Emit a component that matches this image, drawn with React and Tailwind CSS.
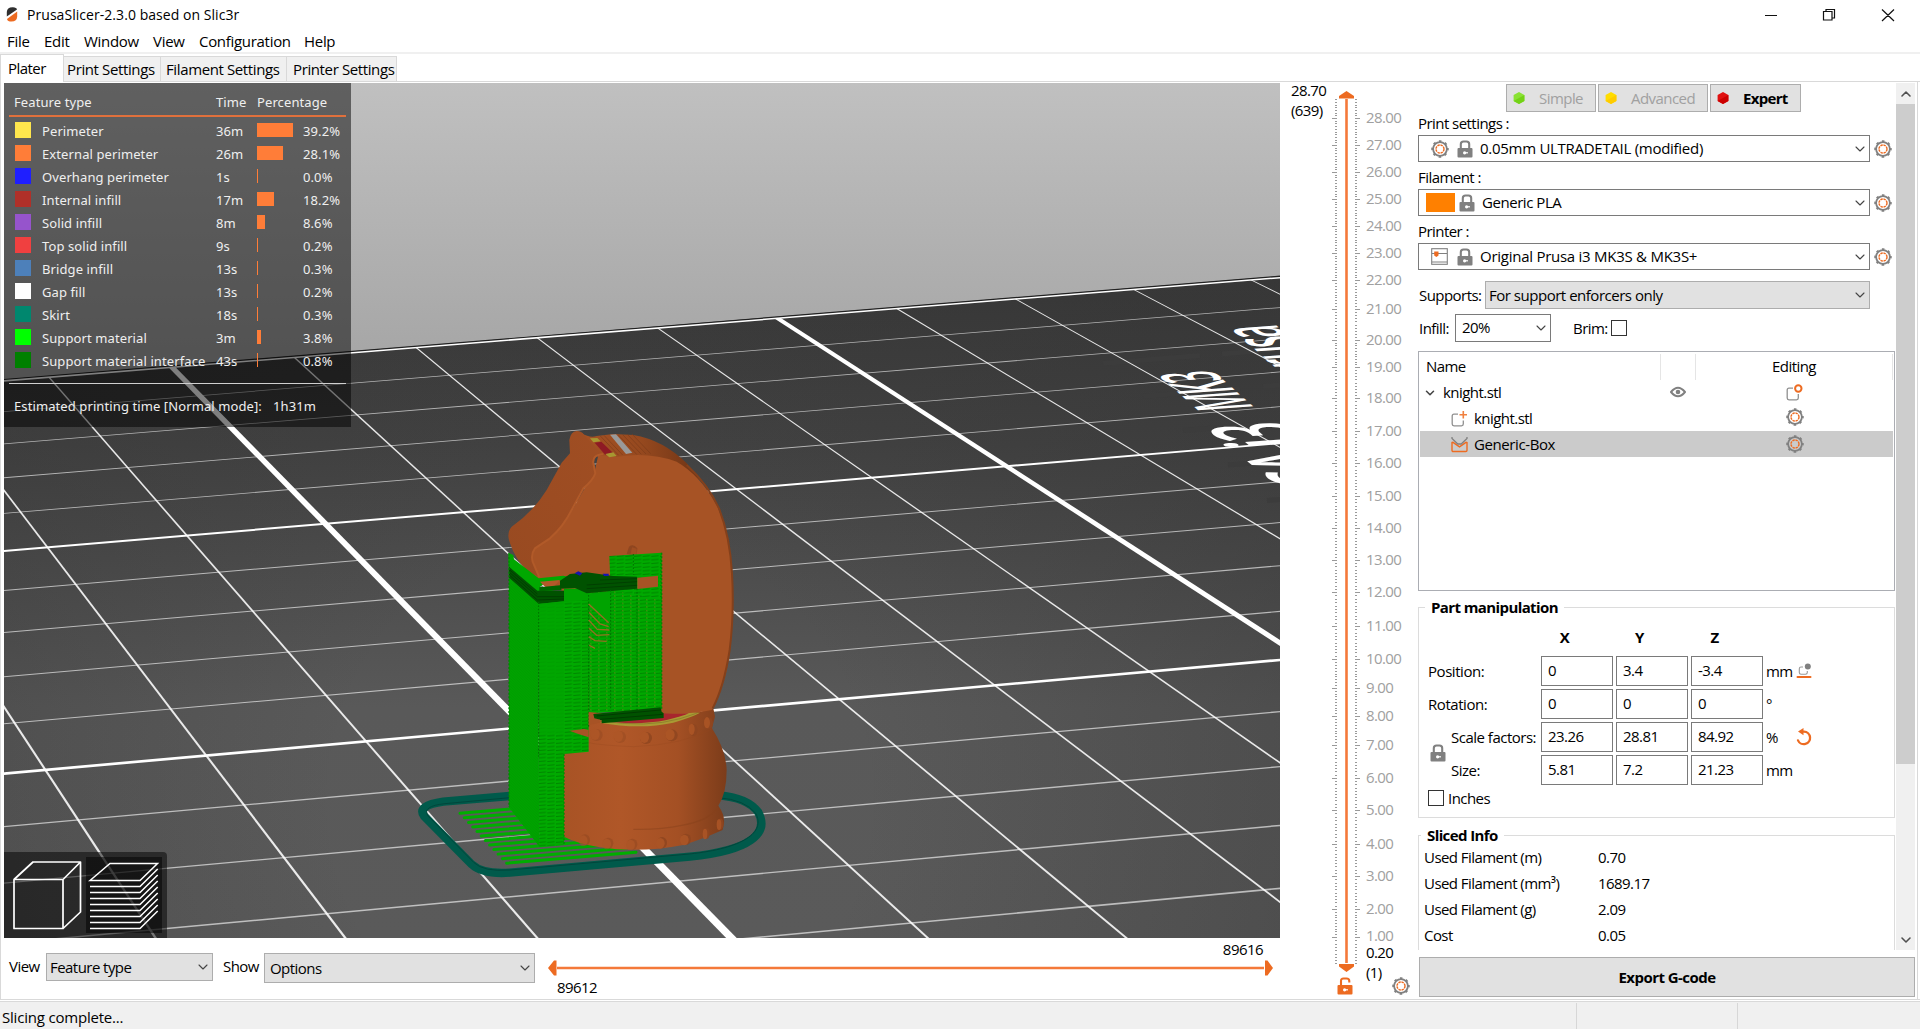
import React from "react";
import { ChevronDown, ChevronUp } from "lucide-react";

/* ---------- print bed projection ---------- */
const quad = [[172, 367.3], [777.6, 318.3], [1303, 657.9], [524.8, 727.2]];

function makeProjection([p0, p1, p2, p3]) {
  const sx = p0[0] - p1[0] + p2[0] - p3[0];
  const sy = p0[1] - p1[1] + p2[1] - p3[1];
  const dx1 = p1[0] - p2[0], dx2 = p3[0] - p2[0];
  const dy1 = p1[1] - p2[1], dy2 = p3[1] - p2[1];
  const det = dx1 * dy2 - dx2 * dy1;
  const g = (sx * dy2 - dx2 * sy) / det;
  const h = (dx1 * sy - sx * dy1) / det;
  const a = p1[0] - p0[0] + g * p1[0];
  const b = p3[0] - p0[0] + h * p3[0];
  const d = p1[1] - p0[1] + g * p1[1];
  const e = p3[1] - p0[1] + h * p3[1];
  return (i, j) => {
    const u = i / 5, v = j / 10;
    const w = g * u + h * v + 1;
    return `${((a * u + b * v + p0[0]) / w).toFixed(2)},${((d * u + e * v + p0[1]) / w).toFixed(2)}`;
  };
}
const project = makeProjection(quad);
const strip = (i0, j0, i1, j1, di, dj) =>
  [project(i0 - di, j0 - dj), project(i1 - di, j1 - dj), project(i1 + di, j1 + dj), project(i0 + di, j0 + dj)].join(" ");

const columns = [];
const rows = [];
for (let i = -8; i <= 12; i++) {
  const t = i % 5 === 0;
  columns.push({ key: i, points: strip(i, 0, i, 17, t ? 0.027 : 0.0075, 0), o: t ? 1 : 0.88 });
}
for (let j = 0; j <= 17; j++) {
  const t = j % 5 === 0;
  rows.push({ key: j, points: strip(-8, j, 13, j, 0, t ? 0.026 : 0.012), o: t ? 1 : 0.62 });
}

const bumps = [[590, 1005], [660, 1011], [738, 1014], [815, 1006], [880, 990], [926, 970]];
const lowBumps = [[555, 1320], [625, 1330], [697, 1333], [786, 1328], [858, 1318], [920, 1300], [962, 1272]];

function Knight() {
  return (
    <g transform="translate(400 400) scale(0.33333)">
      <path d="M330 1188L130 1205Q50 1216 72 1248L215 1393Q248 1424 330 1418L870 1370C1050 1352 1108 1300 1075 1237Q1042 1192 955 1186Z" fill="none" stroke="#005a4b" strokeWidth="25" />
      <path d="M330 1193L135 1211Q65 1218 84 1248L222 1388Q250 1416 330 1410L868 1362C1030 1345 1098 1297 1067 1240Q1035 1199 955 1193" fill="none" stroke="#00463b" strokeWidth="3" />
      {Array.from({ length: 12 }, (_, k) => {
        const x = 180 + k * 12.7, y = 1240 + k * 13.6;
        const x2 = 400 + k * 28;
        return <line key={k} x1={x} y1={y} x2={x2} y2={y - (x2 - x) * 0.085} stroke="#00ad00" strokeWidth="9" strokeLinecap="round" />;
      })}
      {/* base */}
      <path d="M492 930L565 935L700 950L900 935L940 925L945 950L936 985Q978 1050 980 1110Q980 1180 955 1217Q975 1245 972 1270L968 1290Q900 1320 850 1335Q720 1360 600 1342Q530 1330 492 1310Z" fill="url(#base)" />
      <path d="M955 1219Q930 1262 845 1276Q780 1290 700 1288" fill="none" stroke="#84401b" strokeWidth="4" opacity=".45" />
      <path d="M940 985Q850 1035 700 1040Q600 1036 566 1028" fill="none" stroke="#92471f" strokeWidth="3" opacity=".3" />
      {bumps.map(([x, y], i) => (
        <g key={i} opacity={i < 2 ? 0.4 : 0.85}>
          <ellipse cx={x} cy={y} rx={i > 3 ? 13 : 18} ry="18" fill="#8f4620" />
          <ellipse cx={x - 5} cy={y - 2} rx={i > 3 ? 9 : 14} ry="17" fill="#ad5626" />
        </g>
      ))}
      {lowBumps.map(([x, y], i) => (
        <g key={i} opacity={i > 2 ? 0.9 : 0.5}>
          <ellipse cx={x} cy={y} rx={i > 4 ? 9 : 15} ry="17" fill="#8f4620" />
          <ellipse cx={x - 5} cy={y + 2} rx={i > 4 ? 7 : 13} ry="16" fill="#ab5526" />
        </g>
      ))}
      <path d="M600 968Q720 990 820 968Q880 950 900 938L860 935L700 945Z" fill="#a99a33" />
      <path d="M620 965Q720 976 800 960Q850 948 866 940L700 938Z" fill="#a8262d" />
      <path d="M600 962Q740 985 840 956Q885 942 893 938" fill="none" stroke="#84762a" strokeWidth="2" />
      {/* dark crest behind the side face */}
      <path d="M545 100Q570 115 590 108L640 102L700 105Q790 120 860 190L900 240L600 180Z" fill="url(#crest)" />
      {/* side face */}
      <path d="M595 165L650 170Q750 155 830 185Q900 225 950 315Q985 390 992 480Q1002 560 998 640Q996 740 978 820Q960 890 935 930Q860 945 785 940L560 930V600L415 545L380 500L395 445L500 360L585 210Z" fill="#a75325" />
      <path d="M860 195Q925 255 957 325Q990 410 996 520Q1003 640 989 750Q972 860 938 925" fill="none" stroke="#84401b" strokeWidth="6" />
      {/* front of the head */}
      <path d="M510 160L508 120Q512 95 530 93Q545 93 552 104L608 165Q580 165 582 190L588 220Q580 240 550 265L515 330Q490 380 450 415L405 445Q392 462 398 485L418 532L380 512Q345 475 330 430Q318 400 335 380Q400 335 440 270L485 188Z" fill="url(#face)" />
      <path d="M610 162Q576 165 580 190L586 220Q580 240 550 265L515 330Q490 380 450 415L405 445Q392 462 398 485L418 532" fill="none" stroke="#b15a29" strokeWidth="6" />
      <path d="M630 104L648 103L697 158L678 162Z" fill="#9a9a9a" />
      <path d="M584 128L604 125L640 160L616 165Z" fill="#8e1a24" />
      <path d="M570 115L592 114L602 124L580 127ZM616 162L640 157L650 168L628 172Z" fill="#a79731" />
      {[600, 612, 655, 668, 682, 696].map((x, i) => (
        <path key={x} d={`M${x} ${107 - i}L${x + 56} ${166 - i}`} stroke="#7c3b19" strokeWidth="2.5" fill="none" opacity=".8" />
      ))}
      <path d="M680 462L687 440Q700 430 712 445L710 466Z" fill="#8f4620" />
      <path d="M692 462L696 442L710 446V466Z" fill="#a04e22" />
      {/* supports */}
      <path d="M325 458L340 465L342 478L416 535L490 527L504 530L500 540L440 545L420 560L470 575L492 572V606L415 612L327 540Z" fill="#00a800" />
      <path d="M327 500L412 572L492 572V606L414 612L327 534Z" fill="#005200" />
      <path d="M327 508L412 582M327 516L412 590M327 524L412 600M412 590H492M412 600L492 597" stroke="#003d00" strokeWidth="3" />
      <path d="M420 545L480 540L460 562L435 560Z" fill="#b3592a" />
      <path d="M418 562L480 556L485 570L418 574Z" fill="#006400" />
      <path d="M327 533L414 610L418 1340L327 1222Z" fill="url(#gdiag)" />
      <path d="M414 612L492 604V1334L418 1340Z" fill="url(#gline)" />
      <path d="M414 612L492 604V1000L418 1005Z" fill="#00a500" opacity=".8" />
      <path d="M492 566H545L566 585V1055L492 1062Z" fill="url(#gline)" />
      <path d="M560 578L785 560V928L566 940Z" fill="url(#gline2)" />
      <path d="M492 566H545L566 582L632 574V670L566 610V600L492 606Z" fill="#00a300" />
      <path d="M566 612L626 668M566 636L600 672L626 680M566 660L592 688L628 690M566 684L590 706L628 704M566 710L585 722L620 724M566 735L585 745" fill="none" stroke="#927022" strokeWidth="4" />
      <path d="M628 468L785 458V600L632 570Z" fill="url(#gline)" />
      <path d="M480 542L510 522L560 517L640 528L711 530V566L560 580L525 564L480 566Z" fill="#005200" />
      <path d="M560 555L711 545M560 566L711 556M600 540L711 536" stroke="#003f00" strokeWidth="3" />
      <path d="M712 533L774 527V560L712 567Z" fill="#a75325" />
      <path d="M524 520L535 514L547 520L540 527ZM608 521L626 521V528H612Z" fill="#1515b0" />
      <path d="M416 606V1070M566 585V985M711 566V930M632 570V930M700 462V525" stroke="#006d00" strokeWidth="3" strokeDasharray="5 5" />
      <path d="M785 458V928M492 1062V1334M327 460V1220" stroke="#008800" strokeWidth="4" strokeDasharray="6 5" />
      <path d="M508 992L552 987L566 990V1012L535 1002Z" fill="#a75325" />
      <path d="M566 936L590 938L600 968L566 975Z" fill="#a75325" />
      <path d="M580 942L782 922L785 935L791 940V954L605 970V960L583 955Z" fill="#005200" />
      <path d="M590 948L782 930M600 958L788 943" stroke="#003b00" strokeWidth="3" />
    </g>
  );
}

function Scene() {
  return (
    <svg className="block h-[855px] w-[1276px]" viewBox="4 83 1276 855">
      <defs>
        <linearGradient id="sky" gradientUnits="userSpaceOnUse" x1="0" y1="83" x2="0" y2="380">
          <stop offset="0" stopColor="#c0c0c0" /><stop offset="1" stopColor="#a4a4a4" />
        </linearGradient>
        <linearGradient id="bed" gradientUnits="userSpaceOnUse" x1="0" y1="280" x2="0" y2="938">
          <stop offset="0" stopColor="#393939" /><stop offset=".25" stopColor="#424242" /><stop offset=".65" stopColor="#595959" /><stop offset="1" stopColor="#5a5a5a" />
        </linearGradient>
        <radialGradient id="shade" gradientUnits="userSpaceOnUse" cx="600" cy="800" r="760">
          <stop offset=".35" stopColor="#333" stopOpacity="0" /><stop offset="1" stopColor="#333" stopOpacity=".35" />
        </radialGradient>
        <linearGradient id="base"><stop offset="0" stopColor="#a85325" /><stop offset=".35" stopColor="#b05728" /><stop offset=".7" stopColor="#a45024" /><stop offset="1" stopColor="#7c3c1a" /></linearGradient>
        <linearGradient id="crest"><stop offset="0" stopColor="#a55224" /><stop offset=".5" stopColor="#96491f" /><stop offset="1" stopColor="#6f3415" /></linearGradient>
        <linearGradient id="face" x1="0" y1="1" x2="1" y2="0"><stop offset="0" stopColor="#984a21" /><stop offset="1" stopColor="#a04e23" /></linearGradient>
        <pattern id="gdiag" width="8" height="8" patternUnits="userSpaceOnUse">
          <rect width="8" height="8" fill="#00a300" /><path d="M0 0L8 8" stroke="#009600" strokeWidth="1.5" />
        </pattern>
        <pattern id="gline" width="26" height="11" patternUnits="userSpaceOnUse">
          <rect width="26" height="11" fill="#00aa00" /><path d="M0 7L22 5" stroke="#007d00" strokeWidth="2.6" />
        </pattern>
        <pattern id="gline2" width="24" height="11" patternUnits="userSpaceOnUse">
          <rect width="24" height="11" fill="#00a800" /><path d="M0 7L20 5" stroke="#007f00" strokeWidth="2.6" /><path d="M18 5H22" stroke="#6f7d18" strokeWidth="2.6" />
        </pattern>
      </defs>
      <rect x="4" y="83" width="1276" height="300" fill="url(#sky)" />
      <polygon points="4,379.5 1280,276 1280,938 4,938" fill="url(#bed)" />
      <polygon points="4,379.5 1280,276 1280,938 4,938" fill="url(#shade)" />
      <path d="M4 379.8L1280 276.4" stroke="#222" strokeWidth="1.6" />
      {rows.map((l) => <polygon key={l.key} points={l.points} fill="#fff" opacity={l.o} />)}
      {/* rows are interrupted around the lettering */}
      <path d="M1103 363.500L1200 355.500M1222 354L1280 349M1143 396.500L1240 388.500M1263 386.500L1280 385M1183 430.500L1280 422.500M1228 465L1280 461M1267 500.500L1280 499.500" stroke="#3c3c3c" strokeWidth="5" />
      {columns.map((l) => <polygon key={l.key} points={l.points} fill="#fff" opacity={l.o} />)}
      <g fill="#fff" fontFamily="Open Sans, sans-serif" fontWeight="600" fontSize="10">
        <text transform="matrix(-2.15 -1.9 7.7 -0.55 1255 408)">MK3</text>
        <text transform="matrix(-3.6 -2.9 11.2 -0.8 1286 422)" textAnchor="end">SA i3</text>
        <text transform="matrix(-2.4 -2.1 8.4 -0.6 1276 325)" textAnchor="end">rusa</text>
      </g>
      <Knight />
    </svg>
  );
}

/* ---------- icons ---------- */
function Gear({ className = "" }) {
  return (
    <svg className={`h-[18px] w-[18px] shrink-0 ${className}`} viewBox="0 0 18 18" fill="none">
      <circle cx="9" cy="9" r="6.9" stroke="#808080" strokeWidth="1.8" />
      <circle cx="9" cy="9" r="7.9" stroke="#808080" strokeWidth="1.7" strokeDasharray="2.6 3.6" strokeDashoffset="1.3" />
      <circle cx="9" cy="9" r="4" stroke="#ed6b21" strokeWidth="1.4" strokeDasharray="2.4 .74" />
    </svg>
  );
}
function Lock({ open = false }) {
  const c = open ? "#ed6b21" : "#808080";
  return (
    <svg className="h-[18px] w-4 shrink-0" viewBox="0 0 16 18">
      <path d={open ? "M4 9V4Q4 1.5 6.5 1.5H9.5Q12.3 1.5 12.3 4V5.5" : "M3.8 9V4.2Q3.8 1.5 6.5 1.5H9.5Q12.2 1.5 12.2 4.2V9"} fill="none" stroke={c} strokeWidth="2.1" />
      <rect x=".5" y="8" width="15" height="9.4" rx="1" fill={c} />
      <circle cx="7.6" cy="12.8" r="1.6" fill="#fff" /><path d="M8 12.8h3" stroke="#fff" strokeWidth="1.2" />
    </svg>
  );
}
const Hex = ({ color, dark }) => (
  <svg className="h-3 w-3 shrink-0" viewBox="0 0 12 12">
    <path d="M6 0L11.4 3V9L6 12L.6 9V3Z" fill={color} /><path d="M11.4 3V9L6 12L.6 9Z" fill={dark} />
  </svg>
);
const Printer = () => (
  <svg className="h-[17px] w-[17px] shrink-0" viewBox="0 0 17 17" fill="none">
    <rect x=".7" y=".7" width="15.6" height="15.6" stroke="#808080" strokeWidth="1.1" />
    <path d="M1 5.5H16M1 14H16" stroke="#808080" /><path d="M3.2 3.500H7.500V7.500L5.400 9L3.200 7.500Z" fill="#ed6b21" />
  </svg>
);
const Eye = () => (
  <svg className="h-3 w-4" viewBox="0 0 16 12">
    <path d="M1 6Q8 -2.5 15 6Q8 14.5 1 6Z" fill="none" stroke="#808080" strokeWidth="2" /><circle cx="8" cy="6" r="2.3" fill="#808080" />
  </svg>
);
const EditObject = () => (
  <svg className="h-[17px] w-[17px]" viewBox="0 0 17 17" fill="none">
    <path d="M7 4.2H3Q1.2 4.2 1.2 6V14Q1.2 15.8 3 15.8H10.5Q12.3 15.8 12.3 14V10" stroke="#909090" strokeWidth="1.3" />
    <circle cx="12.3" cy="4.5" r="3.2" stroke="#ed6b21" strokeWidth="2" />
  </svg>
);
const AddPart = () => (
  <svg className="h-[17px] w-[17px] shrink-0" viewBox="0 0 17 17" fill="none">
    <path d="M7 4.2H3Q1.2 4.2 1.2 6V14Q1.2 15.8 3 15.8H10.5Q12.3 15.8 12.3 14V10.5" stroke="#909090" strokeWidth="1.3" />
    <path d="M12.3 1V8.4M8.5 4.7H16" stroke="#f0803f" strokeWidth="1.6" />
  </svg>
);
const Enforcer = () => (
  <svg className="h-[17px] w-[17px] shrink-0" viewBox="0 0 17 17" fill="none">
    <path d="M1 6.5L2 6.3L8.5 10.8L15 6.3L16 6.5V14.2Q16 15.5 14.8 15.5H2.2Q1 15.5 1 14.2Z" stroke="#ed6b21" strokeWidth="1.4" />
    <path d="M1 1V2.5L6.8 8H10.2L16 2.5V1" stroke="#808080" strokeWidth="1.3" />
  </svg>
);
const DropToBed = () => (
  <svg className="h-4 w-4" viewBox="0 0 16 16" fill="none">
    <path d="M7 4H5Q3.3 4 3.3 5.7V9.5Q3.3 11.2 5 11.2H9.5Q11.3 11.2 11.3 9.5V8" stroke="#999" strokeWidth="1.1" />
    <circle cx="11.8" cy="3.4" r="3" fill="#808080" /><path d="M1.5 14H14.5" stroke="#ed6b21" strokeWidth="2" strokeLinecap="round" />
  </svg>
);
const Reset = () => (
  <svg className="h-[18px] w-4" viewBox="0 0 16 18" fill="none">
    <path d="M6.5 3.6H8A6.3 6.3 0 1 1 2 12.4" stroke="#ed6b21" strokeWidth="2.3" strokeLinecap="round" />
    <path d="M2 3.6L7.5 0V7.2Z" fill="#ed6b21" />
  </svg>
);

const Chevron = ({ className = "" }) => <ChevronDown className={`shrink-0 text-[#444] ${className}`} size={16} strokeWidth={1.6} />;

/* ---------- legend ---------- */
const features = [
  ["Perimeter", "36m", "39.2%", "w-9", "bg-[#ffe64d]"],
  ["External perimeter", "26m", "28.1%", "w-[26px]", "bg-[#ff7d38]"],
  ["Overhang perimeter", "1s", "0.0%", "w-px", "bg-[#1f1fff]"],
  ["Internal infill", "17m", "18.2%", "w-[17px]", "bg-[#b03029]"],
  ["Solid infill", "8m", "8.6%", "w-2", "bg-[#9654cc]"],
  ["Top solid infill", "9s", "0.2%", "w-px", "bg-[#f04040]"],
  ["Bridge infill", "13s", "0.3%", "w-px", "bg-[#4d80ba]"],
  ["Gap fill", "13s", "0.2%", "w-px", "bg-white"],
  ["Skirt", "18s", "0.3%", "w-px", "bg-[#00876e]"],
  ["Support material", "3m", "3.8%", "w-1", "bg-[#00ff00]"],
  ["Support material interface", "43s", "0.8%", "w-px", "bg-[#008000]"],
];

function Legend() {
  return (
    <div className="absolute left-0 top-0 h-[344px] w-[347px] bg-black/50 px-[5px] pt-[9px] font-['Noto_Sans',sans-serif] text-[13px] tracking-[0.1px] text-[#efefef]">
      <div className="flex h-[25px] items-center border-b-2 border-[#e0703c] pb-[2px] pl-[5px] leading-none">
        <span className="w-[202px]">Feature type</span>
        <span className="w-[41px]">Time</span>
        <span>Percentage</span>
      </div>
      <div className="mt-[3px] pl-[6px]">
        {features.map(([name, time, pct, w, c]) => (
          <div key={name} className="flex h-[23px] items-center leading-none">
            <span className={`mb-[3px] h-4 w-4 ${c}`} />
            <span className="ml-[11px] w-[174px] whitespace-nowrap">{name}</span>
            <span className="w-[41px]">{time}</span>
            <span className="mb-[3px] w-[46px]"><span className={`block h-[14px] bg-[#ff7d38] ${w}`} /></span>
            <span>{pct}</span>
          </div>
        ))}
      </div>
      <div className="mt-[10px] border-t-[1.5px] border-[#d0d0d0]" />
      <div className="mt-[16px] flex pl-[5px]">
        <span className="w-[259px]">Estimated printing time [Normal mode]:</span>
        <span>1h31m</span>
      </div>
    </div>
  );
}

function ViewToolbar() {
  return (
    <div className="absolute bottom-0 left-0 flex h-[86px] w-[163px] rounded-tr bg-black/50">
      <svg className="h-[86px] w-[82px]" viewBox="4 852 82 86" fill="none" stroke="#fff" strokeWidth="1.7" strokeLinejoin="round">
        <path d="M14 879.5H63V928.5H14ZM14 879.5L33 862H80.5L63 879.5M80.5 862V912L63 928.5" />
      </svg>
      <div className="mt-[5px] h-[76px] w-[76px] bg-black/50">
        <svg className="h-[76px] w-[76px]" viewBox="86 857 76 76" fill="none" stroke="#fff" strokeWidth="1.5">
          <path d="M90 880.500L110 863.500H157.500L140 880.500Z" />
          {Array.from({ length: 8 }, (_, i) => <path key={i} d={`M90 ${886.5 + i * 6}H140L157.7 ${869 + i * 6}`} />)}
        </svg>
      </div>
    </div>
  );
}

/* ---------- layer ruler ---------- */
const marks = [970, 937, 909, 876, 844, 810, 778, 745, 716, 688, 659, 626, 592, 560, 528, 496, 463, 431, 398, 367, 340, 309, 280, 253, 226, 199, 172, 145, 118, 91];
const minor = [];
for (let k = 0; k < marks.length - 1; k++)
  for (let s = 1; s < 10; s++) {
    const y = Math.round(marks[k] + ((marks[k + 1] - marks[k]) * s) / 10);
    if (y >= 99 && y <= 963) minor.push(y);
  }

function LayerSlider() {
  return (
    <div className="relative h-[918px] w-[132px] shrink-0 text-black">
      <svg className="block h-[918px] w-[132px]" viewBox="1280 82 132 918">
        <path d={minor.map((y) => `M1335 ${y}.5h2M1355 ${y}.5h2`).join("")} stroke="#9a9a9a" strokeWidth="1" />
        <path d={marks.slice(1, -1).map((y) => `M1332 ${y}.5h5M1355 ${y}.5h5`).join("")} stroke="#9a9a9a" strokeWidth="1" />
        <path d="M1346.5 99V963" stroke="#f4793a" strokeWidth="2.6" />
        <path d="M1339 98.5V96L1346.5 91L1354 96V98.5ZM1339 964V966.5L1346.5 972L1354 966.5V964Z" fill="#ed6b21" />
        <g className="fill-[#a0a0a0] font-['Open_Sans',sans-serif] text-[15px] tracking-[-0.6px]">
          {marks.slice(1, -1).map((y, i) => (
            <text key={y} x="1366" y={i === 0 ? y + 4 : y + 5}>{`${i + 1}.00`}</text>
          ))}
        </g>
        <g className="fill-black font-['Open_Sans',sans-serif] text-[15px] tracking-[-0.6px]">
          <text x="1291" y="96">28.70</text>
          <text x="1291" y="116">(639)</text>
          <text x="1366" y="957.5">0.20</text>
          <text x="1366" y="978">(1)</text>
        </g>
      </svg>
      <div className="absolute bottom-[5px] left-[57px] flex w-[73px] items-center justify-between"><Lock open /><Gear /></div>
    </div>
  );
}

/* ---------- right panel ---------- */
function Preset({ label, icon, gap, text, textClass }) {
  return (
    <div className="h-[54px]">
      <div className="flex h-[23px] items-center">{label}</div>
      <div className="flex items-center">
        <div className={`flex h-[27px] w-[452px] items-center border border-[#7a7a7a] pr-[1px] ${gap}`}>
          {icon}
          <span className={`ml-[7px] flex-1 ${textClass}`}>{text}</span>
          <Chevron />
        </div>
        <Gear className="ml-[4px]" />
      </div>
    </div>
  );
}

const fields = [
  ["Position:", ["0", "3.4", "-3.4"], "mm", <DropToBed />],
  ["Rotation:", ["0", "0", "0"], "°", null],
  ["Scale factors:", ["23.26", "28.81", "84.92"], "%", <Reset />],
  ["Size:", ["5.81", "7.2", "21.23"], "mm", null],
];

function Group({ title, className, titleClass, children }) {
  return (
    <div className={`relative w-[477px] border border-[#dcdcdc] ${className}`}>
      <div className={`absolute -top-[11px] bg-white px-[6px] font-bold leading-[20px] ${titleClass}`}>{title}</div>
      {children}
    </div>
  );
}

function Sidebar() {
  return (
    <div className="flex h-[918px] w-[506px] shrink-0 flex-col border-r border-[#d9d9d9]">
      <div className="flex h-[868px]">
        <div className="w-[484px] overflow-hidden pl-[6px]">
          <div className="flex gap-[2px] pl-[88px] pt-[2px]">
            <div className="flex h-7 w-[90px] items-center border border-[#adadad] bg-[#e1e1e1] pl-[6px] text-[#a0a0a0]"><Hex color="#8ae234" dark="#73d216" /><span className="ml-[14px]">Simple</span></div>
            <div className="flex h-7 w-[110px] items-center border border-[#adadad] bg-[#e1e1e1] pl-[6px] text-[#a0a0a0]"><Hex color="#ffdd00" dark="#ffcc00" /><span className="ml-[14px]">Advanced</span></div>
            <div className="flex h-7 w-[91px] items-center border border-[#adadad] bg-[#e1e1e1] pl-[6px] font-bold"><Hex color="#e01010" dark="#cc0000" /><span className="ml-[14px] tracking-[-0.7px]">Expert</span></div>
          </div>
          <Preset label="Print settings :" gap="pl-[12px]" icon={<><Gear className="mr-[8px]" /><Lock /></>} text="0.05mm ULTRADETAIL (modified)" textClass="tracking-[-0.28px]" />
          <Preset label="Filament :" gap="pl-[7px]" icon={<><span className="mr-[4px] h-[19px] w-[29px] bg-[#ff8000]" /><Lock /></>} text="Generic PLA" textClass="tracking-[-0.45px]" />
          <Preset label="Printer :" gap="pl-[12px]" icon={<><Printer /><span className="w-[9px]" /><Lock /></>} text="Original Prusa i3 MK3S & MK3S+" textClass="tracking-[-0.26px]" />
          <div className="mt-[7px] flex h-7 items-center pl-px">
            <span className="w-[66px]">Supports:</span>
            <div className="flex h-7 w-[385px] items-center justify-between border border-[#adadad] bg-[#e1e1e1] pl-[3px] pr-[1px]"><span className="tracking-[-0.48px]">For support enforcers only</span><Chevron /></div>
          </div>
          <div className="mt-[5px] flex h-7 items-center pl-px">
            <span className="w-9">Infill:</span>
            <div className="flex h-7 w-24 items-center justify-between border border-[#7a7a7a] pb-px pl-[6px] pr-[1px]"><span>20%</span><Chevron /></div>
            <span className="ml-[22px] w-[38px]">Brim:</span>
            <span className="h-4 w-4 border border-[#333]" />
          </div>
          <div className="mt-[9px] h-[240px] w-[477px] border border-[#abadb3] p-px">
            <div className="flex h-[27px] items-center">
              <span className="w-[240px] pb-px pl-[6px]">Name</span>
              <span className="h-[26px] w-9 border-x border-[#e5e5e5]" />
              <span className="flex h-[26px] flex-1 items-center justify-center border-r border-[#e5e5e5]">Editing</span>
            </div>
            <div className="flex h-[25px] items-center">
              <div className="flex w-[240px] items-center pl-[3px]"><ChevronDown size={14} strokeWidth={2.6} className="text-[#444]" /><span className="ml-[6px]">knight.stl</span></div>
              <div className="flex w-9 justify-center pb-px"><Eye /></div>
              <div className="flex flex-1 justify-center pb-px"><EditObject /></div>
            </div>
            <div className="flex h-[26px] items-center">
              <div className="flex w-[276px] items-center pl-[31px]"><AddPart /><span className="ml-[6px]">knight.stl</span></div>
              <div className="flex flex-1 justify-center pb-[2px]"><Gear /></div>
            </div>
            <div className="flex h-[26px] items-center bg-[#cbcbcb]">
              <div className="flex w-[276px] items-center pl-[31px]"><Enforcer /><span className="ml-[6px] tracking-[-0.4px]">Generic-Box</span></div>
              <div className="flex flex-1 justify-center pb-px"><Gear /></div>
            </div>
          </div>
          <Group title="Part manipulation" className="mt-[16px] h-[211px] pt-[17px]" titleClass="left-[6px] tracking-[-0.6px]">
            <div className="flex h-[24px] items-center pl-[108px] font-bold">
              {["X", "Y", "Z"].map((a) => <span key={a} className="w-[75px] text-center">{a}</span>)}
            </div>
            <div className="mt-[7px] flex flex-col gap-[3px]">
              {fields.map(([label, vals, unit, icon], r) => (
                <div key={label} className="flex h-[30px] items-center">
                  <span className={r > 1 ? "w-[122px] whitespace-nowrap pl-[32px] tracking-[-0.5px]" : "w-[122px] pl-[9px] tracking-[-0.45px]"}>{label}</span>
                  <div className="flex gap-[3px]">
                    {vals.map((v, i) => <span key={i} className="flex h-[30px] w-[72px] items-center border border-[#7a7a7a] pb-[2px] pl-[6px]">{v}</span>)}
                  </div>
                  <span className="ml-[3px] w-[30px]">{unit}</span>
                  {icon}
                </div>
              ))}
            </div>
            <div className="absolute left-[11px] top-[136px]"><Lock /></div>
            <div className="mt-[3px] flex h-[20px] items-center pl-[9px]"><span className="h-4 w-4 border border-[#333]" /><span className="ml-[4px]">Inches</span></div>
          </Group>
          <Group title="Sliced Info" className="mt-[17px] h-[140px] pt-[8px]" titleClass="left-[2px] tracking-[-0.6px]">
            {[["Used Filament (m)", "0.70"], ["Used Filament (mm³)", "1689.17"], ["Used Filament (g)", "2.09"], ["Cost", "0.05"]].map(([k, v]) => (
              <div key={k} className="flex h-[26px] items-center pl-[5px]"><span className="w-[174px]">{k}</span><span>{v}</span></div>
            ))}
          </Group>
        </div>
        <div className="mt-px flex w-[19px] flex-col bg-[#f0f0f0]">
          <div className="flex h-[21px] items-center justify-center"><ChevronUp size={16} strokeWidth={2.4} className="text-[#505050]" /></div>
          <div className="h-[660px] bg-[#cdcdcd]" />
          <div className="flex-1" />
          <div className="flex h-[21px] items-center justify-center"><ChevronDown size={16} strokeWidth={2.4} className="text-[#505050]" /></div>
        </div>
      </div>
      <div className="ml-[7px] mt-[7px] flex h-10 w-[496px] items-center justify-center border border-[#adadad] bg-[#e1e1e1] font-bold">Export G-code</div>
    </div>
  );
}

export default function App() {
  return (
    <div className="flex h-[1029px] w-[1920px] flex-col overflow-hidden bg-white font-['Open_Sans',sans-serif] text-[15px] leading-none tracking-[-0.55px] text-black">
      <div className="flex h-[29px] items-center">
        <svg className="ml-[6px] h-[15px] w-[12px]" viewBox="0 0 12 15">
          <path d="M.8 9.5V5Q1 0 7 .2Q10.5.4 11 2.5Z" fill="#2f2f2f" /><path d="M11.2 4.5V9.5Q11 14.6 5.5 14.6Q1.5 14.6 1 12Z" fill="#ed6b21" />
        </svg>
        <span className="ml-[9px] text-[14px] tracking-[0.05px]">PrusaSlicer-2.3.0 based on Slic3r</span>
        <svg className="ml-auto mr-[25px] h-[14px] w-[130px]" viewBox="0 0 130 14" fill="none" stroke="#111" strokeWidth="1.2">
          <path d="M0 7.500H12M58.500 3.500h8.500v8.500h-8.500zM61 3.500V1.500h8.500v8.500h-2.500M117 1.500L129 13M129 1.500L117 13" />
        </svg>
      </div>
      <div className="flex h-[25px] items-center border-b-2 border-[#f0f0f0] pt-px">
        {[["File", "w-[37px]"], ["Edit", "w-[40px]"], ["Window", "w-[69px]"], ["View", "w-[46px]"], ["Configuration", "w-[105px]"], ["Help", "w-[40px]"]].map(([m, w], i) => (
          <span key={m} className={`${w} whitespace-nowrap tracking-[-0.3px] ${i === 0 ? "ml-[7px]" : ""}`}>{m}</span>
        ))}
      </div>
      <div className="flex h-[28px] items-end border-b border-[#d9d9d9]">
        <div className="z-10 -mb-px flex h-[28px] w-16 items-center border border-b-0 border-[#d9d9d9] bg-white pb-px pl-[7px]">Plater</div>
        {[["Print Settings", "w-[97px] pl-[3px]"], ["Filament Settings", "w-[126px] pl-[5px]"], ["Printer Settings", "w-[110px] pl-[6px]"]].map(([t, w]) => (
          <div key={t} className={`flex h-[25px] items-center whitespace-nowrap border-r border-t border-[#d9d9d9] bg-[#f0f0f0] tracking-[-0.38px] ${w}`}>{t}</div>
        ))}
      </div>
      <div className="flex h-[918px] border-b border-[#d9d9d9]">
        <div className="flex w-[1280px] flex-col border-l border-[#d9d9d9] pl-[3px] pt-px">
          <div className="relative h-[855px] w-[1276px]">
            <Scene />
            <Legend />
            <ViewToolbar />
          </div>
          <div className="flex h-[62px]">
            <span className="ml-[5px] mt-[21px] w-[37px]">View</span>
            <div className="mt-[15px] flex h-[28px] w-[167px] items-center justify-between border border-[#adadad] bg-[#e1e1e1] pl-[3px] pr-[1px]"><span>Feature type</span><Chevron /></div>
            <span className="ml-[10px] mt-[21px] w-[41px]">Show</span>
            <div className="mt-[15px] flex h-[30px] w-[271px] items-center justify-between border border-[#adadad] bg-[#e1e1e1] pl-[5px] pr-[1px]"><span>Options</span><Chevron /></div>
            <div className="ml-[13px] w-[726px]">
              <div className="flex h-[22px] items-center justify-end pr-[11px]">89616</div>
              <svg className="h-[16px] w-[726px]" viewBox="0 0 726 16">
                <path d="M9 8H716" stroke="#f4793a" strokeWidth="2.6" /><path d="M8.500 .5V15.500H6L0 8L6 .5ZM717 .5V15.500H719.500L725 8L719.500 .5Z" fill="#ed6b21" />
              </svg>
              <div className="flex h-[22px] items-center pl-[9px]">89612</div>
            </div>
          </div>
        </div>
        <LayerSlider />
        <Sidebar />
      </div>
      <div className="mt-px flex h-[28px] items-center border-t border-[#d9d9d9] bg-[#f0f0f0] pl-[2px]">
        <span className="w-[1574px] pt-[3px] tracking-[-0.2px]">Slicing complete...</span>
        <span className="h-[26px] w-[161px] border-l border-[#d7d7d7]" />
        <span className="h-[26px] border-l border-[#d7d7d7]" />
      </div>
    </div>
  );
}
